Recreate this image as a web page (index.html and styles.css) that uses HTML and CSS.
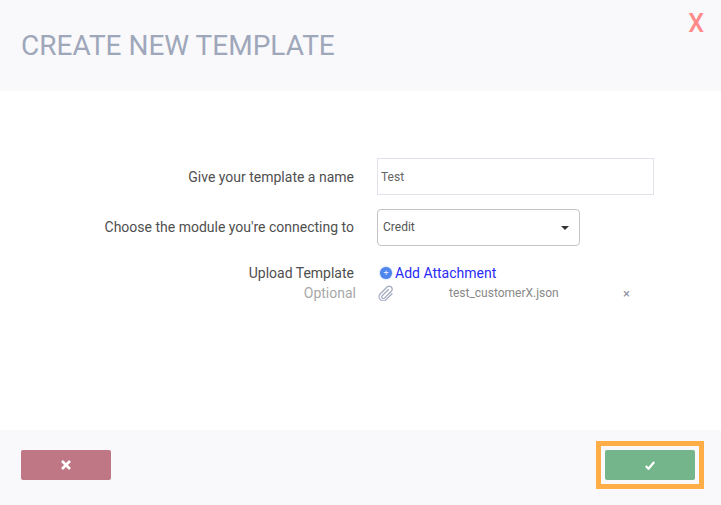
FILE: index.html
```html
<!DOCTYPE html>
<html lang="en">
<head>
  <meta charset="UTF-8" />
  <title>Create New Template</title>
  <link rel="stylesheet" href="styles.css">
</head>
<body>
  <div class="modal">
    <header class="modal-head">
      <h1>CREATE NEW TEMPLATE</h1>
      <span class="close">X</span>
    </header>

    <div class="modal-body">
      <div class="row">
        <label class="row-label row-label-name">Give your template a name</label>
        <input class="text-input" type="text" value="Test" />
      </div>

      <div class="row">
        <label class="row-label">Choose the module you're connecting to</label>
        <div class="select">
          <span>Credit</span>
          <span class="caret"></span>
        </div>
      </div>

      <div class="row row-upload">
        <div class="row-label">
          <div>Upload Template</div>
          <div class="optional">Optional</div>
        </div>
        <div class="upload">
          <a class="add-link">
            <span class="plus">+</span>Add Attachment
          </a>
          <div class="file">
            <svg class="clip" width="16" height="16" viewBox="0 0 16 16" fill="none" stroke="#a3abc0" stroke-width="1.3" stroke-linecap="round">
              <path d="M10.500 4.500 4.200 10.800a1.600 1.600 0 0 0 2.300 2.300L13.500 6a3 3 0 0 0-4.200-4.200L2.300 8.800a4.100 4.100 0 0 0 5.800 5.800L14 8.700" />
            </svg>
            <span class="file-name">test_customerX.json</span>
            <span class="file-remove">&times;</span>
          </div>
        </div>
      </div>
    </div>

    <footer class="modal-foot">
      <button class="btn btn-cancel">
        <svg width="10" height="10" viewBox="0 0 10 10" fill="none" stroke="#fff" stroke-width="2.600">
          <path d="M1 1l8 8M9 1l-8 8" />
        </svg>
      </button>
      <div class="highlight">
        <button class="btn btn-ok">
          <svg width="10" height="9" viewBox="0 0 10 9" fill="none" stroke="#fff" stroke-width="2.200">
            <path d="M.8 5l2.700 2.800L9.200 1" />
          </svg>
        </button>
      </div>
    </footer>
  </div>
</body>
</html>
```

FILE: styles.css
```css
* {
  box-sizing: border-box;
}

body {
  margin: 0;
  font-family: 'Roboto', sans-serif;
  color: #4a4a4a;
  background: #fff;
}

.modal {
  height: 505px;
  display: flex;
  flex-direction: column;
}

.modal-head {
  height: 91px;
  background: #f9f9fb;
  display: flex;
  justify-content: space-between;
  padding: 0 17px 0 21px;
}

.modal-head h1 {
  margin: 31px 0 0;
  font-size: 28px;
  line-height: 30px;
  font-weight: 400;
  color: #9fa7ba;
}

.close {
  margin-top: 9px;
  font-size: 25px;
  line-height: 30px;
  font-weight: 500;
  color: #ff8a8a;
}

.modal-body {
  flex: 1;
  padding-top: 67px;
}

.row {
  display: flex;
  align-items: center;
  margin-bottom: 14px;
}

.row-label {
  width: 354px;
  margin-right: 23px;
  text-align: right;
  font-size: 14px;
  line-height: 19px;
  color: #4f4f4f;
}

.row-label-name {
  padding-top: 1px;
}

.text-input {
  width: 277px;
  height: 37px;
  padding: 0 3px;
  border: 1px solid #e0e3ea;
  font-family: inherit;
  font-size: 12px;
  color: #666;
  outline: none;
}

.select {
  width: 203px;
  height: 37px;
  padding: 0 10px 2px 5px;
  border: 1px solid #c4c4c4;
  border-radius: 4px;
  display: flex;
  align-items: center;
  justify-content: space-between;
  font-size: 12px;
  color: #555;
}

.caret {
  margin-top: 2px;
  border-left: 4px solid transparent;
  border-right: 4px solid transparent;
  border-top: 4px solid #333;
}

.row-upload {
  align-items: flex-start;
  margin-top: 17px;
}

.row-upload .row-label {
  line-height: 20px;
}

.optional {
  margin-right: -2px;
  color: #a8a8a8;
}

.upload {
  width: 277px;
}

.add-link {
  display: flex;
  align-items: center;
  height: 20px;
  padding-left: 3px;
  font-size: 14px;
  color: #2a2af5;
}

.plus {
  width: 12px;
  height: 12px;
  margin-right: 3px;
  border-radius: 50%;
  background: #4f86ee;
  box-shadow: 0 0 2px #7fa6f0;
  color: #dfe8fb;
  font-size: 9px;
  line-height: 12px;
  text-align: center;
}

.file {
  display: flex;
  align-items: center;
  height: 20px;
  color: #888;
}

.clip {
  margin-left: 1px;
  flex-shrink: 0;
}

.file-name {
  margin-left: 55px;
  width: 174px;
  font-size: 12px;
}

.file-remove {
  color: #8a90a0;
  font-size: 13px;
}

.modal-foot {
  height: 75px;
  background: #f9f9fb;
  display: flex;
  align-items: center;
  justify-content: space-between;
  padding: 0 17px 5px 21px;
}

.btn {
  width: 90px;
  height: 30px;
  padding: 0;
  border: none;
  border-radius: 2px;
  display: flex;
  align-items: center;
  justify-content: center;
}

.btn-cancel {
  background: #bf7786;
}

.btn-ok {
  background: #75b58b;
}

/* orange box around the confirm button */
.highlight {
  padding: 4px;
  border: 5px solid #ffad47;
}
```
